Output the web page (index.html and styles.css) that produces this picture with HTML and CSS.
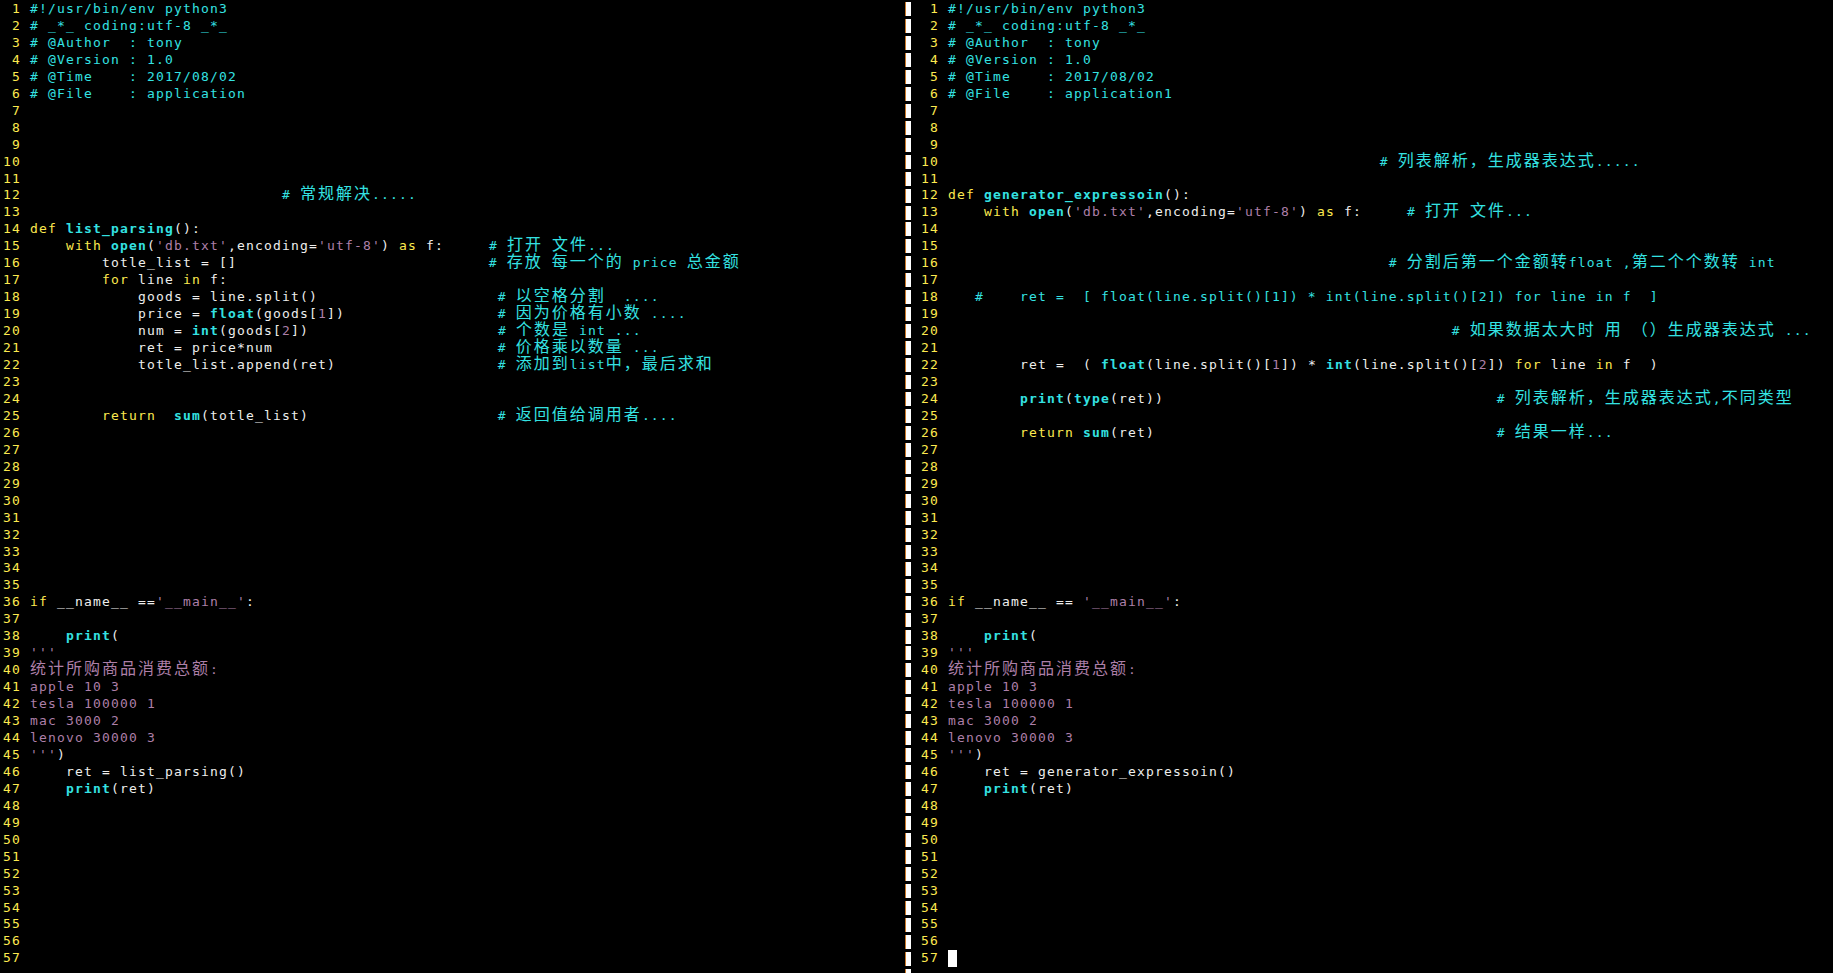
FILE: index.html
```html
<!DOCTYPE html>
<html lang="zh-CN">
<head>
    <meta charset="UTF-8">
    <title>vim - application</title>
    <link rel="stylesheet" href="styles.css">
</head>
<body>
<div class="screen">

    <div class="pane pane-left">
        <pre class="gutter">
1
2
3
4
5
6
7
8
9
10
11
12
13
14
15
16
17
18
19
20
21
22
23
24
25
26
27
28
29
30
31
32
33
34
35
36
37
38
39
40
41
42
43
44
45
46
47
48
49
50
51
52
53
54
55
56
57</pre>
        <pre class="code">
<span class="c">#!/usr/bin/env python3</span>
<span class="c"># _*_ coding:utf-8 _*_</span>
<span class="c"># @Author  : tony</span>
<span class="c"># @Version : 1.0</span>
<span class="c"># @Time    : 2017/08/02</span>
<span class="c"># @File    : application</span>





                            <span class="c"># <span class="zh">常规解决</span>.....</span>

<span class="k">def</span> <span class="f">list_parsing</span>():
    <span class="k">with</span> <span class="f">open</span>(<span class="s">'db.txt'</span>,encoding=<span class="s">'utf-8'</span>) <span class="k">as</span> f:     <span class="c"># <span class="zh">打开</span> <span class="zh">文件</span>...</span>
        totle_list = []                            <span class="c"># <span class="zh">存放</span> <span class="zh">每一个的</span> price <span class="zh">总金额</span></span>
        <span class="k">for</span> line <span class="k">in</span> f:
            goods = line.split()                    <span class="c"># <span class="zh">以空格分割</span>  ....</span>
            price = <span class="f">float</span>(goods[<span class="s">1</span>])                 <span class="c"># <span class="zh">因为价格有小数</span> ....</span>
            num = <span class="f">int</span>(goods[<span class="s">2</span>])                     <span class="c"># <span class="zh">个数是</span> int ...</span>
            ret = price*num                         <span class="c"># <span class="zh">价格乘以数量</span> ...</span>
            totle_list.append(ret)                  <span class="c"># <span class="zh">添加到</span>list<span class="zh">中，最后求和</span></span>


        <span class="k">return</span>  <span class="f">sum</span>(totle_list)                     <span class="c"># <span class="zh">返回值给调用者</span>....</span>










<span class="k">if</span> __name__ ==<span class="s">'__main__'</span>:

    <span class="f">print</span>(
<span class="s">'''</span>
<span class="s"><span class="zh">统计所购商品消费总额</span>:</span>
<span class="s">apple 10 3</span>
<span class="s">tesla 100000 1</span>
<span class="s">mac 3000 2</span>
<span class="s">lenovo 30000 3</span>
<span class="s">'''</span>)
    ret = list_parsing()
    <span class="f">print</span>(ret)</pre>
    </div>

    <div class="divider"></div>

    <div class="pane pane-right">
        <pre class="gutter">
1
2
3
4
5
6
7
8
9
10
11
12
13
14
15
16
17
18
19
20
21
22
23
24
25
26
27
28
29
30
31
32
33
34
35
36
37
38
39
40
41
42
43
44
45
46
47
48
49
50
51
52
53
54
55
56
57</pre>
        <pre class="code">
<span class="c">#!/usr/bin/env python3</span>
<span class="c"># _*_ coding:utf-8 _*_</span>
<span class="c"># @Author  : tony</span>
<span class="c"># @Version : 1.0</span>
<span class="c"># @Time    : 2017/08/02</span>
<span class="c"># @File    : application1</span>



                                                <span class="c"># <span class="zh">列表解析，生成器表达式</span>.....</span>

<span class="k">def</span> <span class="f">generator_expressoin</span>():
    <span class="k">with</span> <span class="f">open</span>(<span class="s">'db.txt'</span>,encoding=<span class="s">'utf-8'</span>) <span class="k">as</span> f:     <span class="c"># <span class="zh">打开</span> <span class="zh">文件</span>...</span>


                                                 <span class="c"># <span class="zh">分割后第一个金额转</span>float ,<span class="zh">第二个个数转</span> int</span>

<span class="c">   #    ret =  [ float(line.split()[1]) * int(line.split()[2]) for line in f  ]</span>

                                                        <span class="c"># <span class="zh">如果数据太大时</span> <span class="zh">用</span> <span class="zh">（）生成器表达式</span> ...</span>

        ret =  ( <span class="f">float</span>(line.split()[<span class="s">1</span>]) * <span class="f">int</span>(line.split()[<span class="s">2</span>]) <span class="k">for</span> line <span class="k">in</span> f  )

        <span class="f">print</span>(<span class="f">type</span>(ret))                                     <span class="c"># <span class="zh">列表解析，生成器表达式</span>,<span class="zh">不同类型</span></span>

        <span class="k">return</span> <span class="f">sum</span>(ret)                                      <span class="c"># <span class="zh">结果一样</span>...</span>









<span class="k">if</span> __name__ == <span class="s">'__main__'</span>:

    <span class="f">print</span>(
<span class="s">'''</span>
<span class="s"><span class="zh">统计所购商品消费总额</span>:</span>
<span class="s">apple 10 3</span>
<span class="s">tesla 100000 1</span>
<span class="s">mac 3000 2</span>
<span class="s">lenovo 30000 3</span>
<span class="s">'''</span>)
    ret = generator_expressoin()
    <span class="f">print</span>(ret)









<span class="cursor"></span></pre>
    </div>

</div>
</body>
</html>
```

FILE: styles.css
```css
* {
    box-sizing: border-box;
}
body {
    margin: 0;
    height: 973px;
    overflow: hidden;
    background-color: #000;
    color: #eeeeec;
    font-family: "DejaVu Sans Mono", "Noto Sans CJK SC", monospace;
    font-size: 13px;
    letter-spacing: 1.17px;
    line-height: 16.96px;
}
.screen {
    display: flex;
    height: 100%;
    padding-top: 1px;
}
.pane {
    display: flex;
}
.pane-left {
    width: 903px;
    padding-left: 3px;
}
.pane-right {
    flex: 1;
}
pre {
    margin: 0;
    font: inherit;
    letter-spacing: inherit;
}
.gutter {
    width: 18px;
    margin-right: 9px;
    text-align: right;
    color: #fce94f;
}
.code {
    flex: 1;
    white-space: pre;
}
/* vertical split bar */
.divider {
    width: 18px;
    display: flex;
}
.divider::before {
    content: "";
    width: 6px;
    margin-left: 2px;
    background:
        repeating-linear-gradient(to bottom, #000 0, #000 1px, transparent 1px, transparent 15px, #000 15px, #000 16.96px),
        linear-gradient(to right, #c8782a 0, #c8782a 1px, #fff 1px, #fff 6px);
}
/* syntax colours */
.c {
    color: #34e2e2;
}
.k {
    color: #fce94f;
}
.f {
    color: #34e2e2;
    font-weight: bold;
}
.s {
    color: #ad7fa8;
}
.zh {
    font-family: "Noto Sans CJK SC", sans-serif;
    font-size: 16px;
    letter-spacing: 2px;
    line-height: 0;
}
.cursor {
    display: inline-block;
    width: 9px;
    height: 16.96px;
    vertical-align: top;
    background-color: #fff;
}
```
